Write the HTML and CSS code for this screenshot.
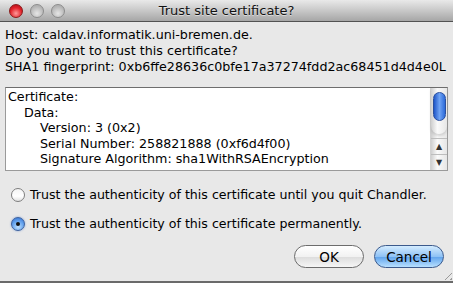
FILE: index.html
```html
<!DOCTYPE html>
<html lang="en">
<head>
  <meta charset="UTF-8" />
  <title>Trust site certificate?</title>
  <link rel="stylesheet" href="styles.css">
</head>
<body>
  <div class="window">
    <!-- Title bar -->
    <div class="titlebar">
      <div class="lights">
        <span class="light close"></span>
        <span class="light"></span>
        <span class="light"></span>
      </div>
      <div class="title">Trust site certificate?</div>
    </div>

    <div class="content">
      <div class="info">
        <div>Host: caldav.informatik.uni-bremen.de.</div>
        <div>Do you want to trust this certificate?</div>
        <div>SHA1 fingerprint: 0xb6ffe28636c0bfe17a37274fdd2ac68451d4d4e0L</div>
      </div>

      <div class="certbox">
        <div class="cert-text">
          <div>Certificate:</div>
          <div class="lvl1">Data:</div>
          <div class="lvl2">Version: 3 (0x2)</div>
          <div class="lvl2">Serial Number: 258821888 (0xf6d4f00)</div>
          <div class="lvl2">Signature Algorithm: sha1WithRSAEncryption</div>
        </div>
        <div class="scrollbar">
          <div class="track">
            <div class="thumb"></div>
          </div>
          <div class="arrow up">&#9650;</div>
          <div class="arrow down">&#9660;</div>
        </div>
      </div>

      <div class="options">
        <label class="option">
          <span class="radio"></span>
          <span>Trust the authenticity of this certificate until you quit Chandler.</span>
        </label>
        <label class="option">
          <span class="radio checked"></span>
          <span>Trust the authenticity of this certificate permanently.</span>
        </label>
      </div>

      <div class="buttons">
        <button class="btn">OK</button>
        <button class="btn default">Cancel</button>
      </div>
    </div>

    <div class="grip"></div>
  </div>
</body>
</html>
```

FILE: styles.css
```css
* {
  margin: 0;
  padding: 0;
  box-sizing: border-box;
}

body {
  font-family: 'DejaVu Sans', sans-serif;
  font-size: 12px;
  color: #000;
  background: #e8e8e8;
  width: 453px;
  height: 283px;
  overflow: hidden;
}

.window {
  position: relative;
  width: 453px;
  height: 283px;
  background: #e8e8e8;
  border-bottom: 2px solid #6a6a6a;
  display: flex;
  flex-direction: column;
}

/* title bar */
.titlebar {
  height: 22px;
  background: linear-gradient(#e9e9e9, #c8c8c8 50%, #a6a6a6);
  border-bottom: 1px solid #525252;
  display: flex;
  align-items: center;
  position: relative;
}

.lights {
  display: flex;
  gap: 7px;
  padding-left: 9px;
}

.light {
  width: 14px;
  height: 14px;
  border-radius: 50%;
  background: radial-gradient(circle at 50% 70%, #e6e6e6, #b3b3b3 70%);
  border: 1px solid #8c8c8c;
}

.light.close {
  background: radial-gradient(circle at 50% 70%, #ff9a9a, #e2222a 55%, #a50c14);
  border-color: #8a1a1a;
}

.title {
  position: absolute;
  left: 0;
  right: 0;
  text-align: center;
  font-size: 13px;
  color: #111;
  text-shadow: 0 1px 0 rgba(255, 255, 255, 0.5);
}

/* content */
.content {
  flex: 1;
  padding: 5px 5px 0;
}

.info {
  line-height: 16px;
  font-size: 12.7px;
}

.certbox {
  margin-top: 12px;
  height: 84px;
  background: #fff;
  border: 1px solid #9a9a9a;
  border-top-color: #6e6e6e;
  display: flex;
}

.cert-text {
  flex: 1;
  padding: 1px 2px;
  line-height: 15.5px;
  font-size: 12.7px;
  overflow: hidden;
  white-space: nowrap;
}

.lvl1 {
  padding-left: 16px;
}

.lvl2 {
  padding-left: 32px;
}

.scrollbar {
  width: 17px;
  border-left: 1px solid #d2d2d2;
  display: flex;
  flex-direction: column;
  background: linear-gradient(90deg, #cfcfcf, #fafafa 40%, #e6e6e6);
}

.track {
  flex: 1;
  padding: 4px 1px 0 2px;
  border-bottom-left-radius: 8px;
  border-bottom-right-radius: 8px;
  box-shadow: 0 2px 3px rgba(0, 0, 0, 0.15);
  margin-bottom: 4px;
}

.thumb {
  height: 29px;
  border-radius: 7px;
  border: 1px solid #2a4f9e;
  background: linear-gradient(90deg, #1f56c8, #6fa3f4 50%, #2b69d8);
}

.arrow {
  height: 16px;
  font-size: 8px;
  line-height: 16px;
  text-align: center;
  color: #333;
  border-top: 1px solid #bdbdbd;
}

/* radio options */
.options {
  margin-top: 16px;
  display: flex;
  flex-direction: column;
  gap: 13px;
  padding-left: 6px;
}

.option {
  display: flex;
  align-items: center;
  gap: 5px;
  font-size: 12.6px;
  line-height: 16px;
}

.radio {
  width: 14px;
  height: 14px;
  border-radius: 50%;
  border: 1px solid #7e7e7e;
  background: linear-gradient(#f4f4f4, #ffffff 60%, #e2e2e2);
  position: relative;
}

.radio.checked {
  border-color: #3a5f9e;
  background: radial-gradient(circle at 50% 75%, #bfe0ff, #6aa7ef 50%, #2f6fd2);
  box-shadow: 0 0 2px rgba(40, 100, 200, 0.6);
}

.radio.checked::after {
  content: '';
  position: absolute;
  left: 4px;
  top: 4px;
  width: 4px;
  height: 4px;
  border-radius: 50%;
  background: #111;
}

/* buttons */
.buttons {
  display: flex;
  justify-content: flex-end;
  gap: 10px;
  margin-top: 13px;
  padding-right: 4px;
}

.btn {
  width: 70px;
  height: 23px;
  border-radius: 12px;
  border: 1px solid #6c6c6c;
  font-family: 'DejaVu Sans', sans-serif;
  font-size: 13.5px;
  color: #000;
  background: linear-gradient(#ffffff, #f2f2f2 50%, #dcdcdc 51%, #f6f6f6);
}

.btn.default {
  border-color: #3c5a8c;
  background: linear-gradient(#d4ecff, #8fc2f5 50%, #5ea2ec 51%, #b8e0ff);
}

/* resize grip */
.grip {
  position: absolute;
  right: 1px;
  bottom: 1px;
  width: 11px;
  height: 11px;
  background: repeating-linear-gradient(135deg, transparent 0 2px, #9a9a9a 2px 3px, transparent 3px 4px);
  clip-path: polygon(100% 0, 100% 100%, 0 100%);
}
```
